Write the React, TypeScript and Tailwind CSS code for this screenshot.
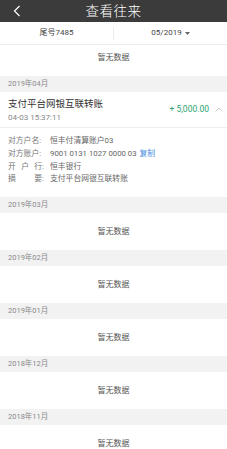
import React from 'react';

const font = { fontFamily: 'Roboto, "Noto Sans CJK SC", sans-serif' };

const MonthHeader: React.FC<{ label: string }> = ({ label }) => (
  <div className="h-[16px] bg-[#f2f2f2] px-[8px] flex items-center text-[7.5px] text-[#8a8a8a]">{label}</div>
);

const Empty: React.FC = () => (
  <div className="h-[37px] flex items-center justify-center text-[8px] text-[#555]">暂无数据</div>
);

const DetailRow: React.FC<{ label: React.ReactNode; children: React.ReactNode }> = ({ label, children }) => (
  <div className="flex items-center h-[12.6px] whitespace-nowrap">
    <div className="w-[42px] shrink-0 text-[#777]">{label}</div>
    <div className="text-[#666]">{children}</div>
  </div>
);

const App: React.FC = () => {
  const months = ['2019年03月', '2019年02月', '2019年01月', '2018年12月', '2018年11月'];
  return (
    <div className="w-[227px] h-[449px] overflow-hidden bg-white" style={font}>
      {/* Title bar */}
      <div className="relative h-[22px] bg-[#3b3b3b] flex items-center justify-center">
        <svg className="absolute left-[13px] top-[5px]" width="8" height="12" viewBox="0 0 8 12">
          <path d="M6.5 1 L1.5 6 L6.5 11" fill="none" stroke="#fff" strokeWidth="1.2" />
        </svg>
        <span className="text-white text-[13.5px] font-light tracking-[0.5px]">查看往来</span>
      </div>

      {/* Filter row */}
      <div className="h-[23px] flex items-center border-b border-[#ececec] text-[8px] text-[#444]">
        <div className="flex-1 text-center">尾号7485</div>
        <div className="w-px h-[13px] bg-[#ececec]" />
        <div className="flex-1 flex items-center justify-center gap-[3px]">
          <span>05/2019</span>
          <svg width="5" height="3" viewBox="0 0 5 3">
            <path d="M0 0 L5 0 L2.5 3 Z" fill="#666" />
          </svg>
        </div>
      </div>

      {/* scrolled list */}
      <div className="h-[31px] overflow-hidden">
        <div className="-mt-[6px]">
          <Empty />
        </div>
      </div>

      <MonthHeader label="2019年04月" />
      <div className="h-[36px] flex items-center pl-[8px] pr-[4px] border-b border-[#eeeeee]">
        <div className="flex-1 flex flex-col">
          <div className="text-[9.5px] text-[#333] leading-[13px]">支付平台网银互联转账</div>
          <div className="text-[8px] text-[#888] leading-[11px] mt-[2px]">04-03 15:37:11</div>
        </div>
        <div className="text-[8.5px] text-[#2ba471] mr-[6px]">+ 5,000.00</div>
        <svg width="8" height="5" viewBox="0 0 8 5">
          <path d="M0.5 4.5 L4 1 L7.5 4.5" fill="none" stroke="#bbb" strokeWidth="0.8" />
        </svg>
      </div>
      <div className="h-[69px] pt-[7px] px-[8px] text-[7.8px]">
        <DetailRow label="对方户名:">恒丰付清算账户03</DetailRow>
        <DetailRow label="对方账户:">
          9001 0131 1027 0000 03 <span className="text-[#4a8ee0] ml-[1px]">复制</span>
        </DetailRow>
        <DetailRow label={<span className="flex justify-between w-[36px]"><span>开</span><span>户</span><span>行:</span></span>}>恒丰银行</DetailRow>
        <DetailRow label={<span className="flex justify-between w-[36px]"><span>摘</span><span>要:</span></span>}>支付平台网银互联转账</DetailRow>
      </div>

      {months.map((m) => (
        <React.Fragment key={m}>
          <MonthHeader label={m} />
          <Empty />
        </React.Fragment>
      ))}
    </div>
  );
};

export default App;
